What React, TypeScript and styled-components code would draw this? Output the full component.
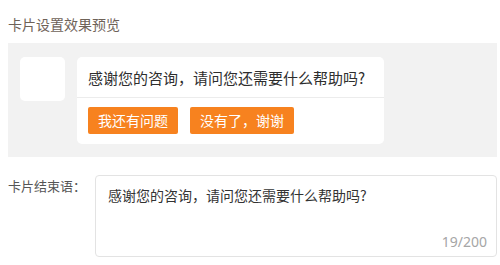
import styled, { createGlobalStyle } from "styled-components";

const GlobalStyle = createGlobalStyle`
    html, body {
        margin: 0;
        padding: 0;
        background: #ffffff;
    }
    body {
        font-family: "Noto Sans CJK SC", "Noto Sans", sans-serif;
        color: #333333;
    }
`;

const message = "感谢您的咨询，请问您还需要什么帮助吗?";
const maxLength = 200;

export default function App() {
    return (
        <Page>
            <GlobalStyle />
            <SectionTitle>卡片设置效果预览</SectionTitle>
            <PreviewPanel>
                <Avatar />
                <Bubble>
                    <BubbleText>{message}</BubbleText>
                    <BubbleActions>
                        <ActionButton>我还有问题</ActionButton>
                        <ActionButton>没有了，谢谢</ActionButton>
                    </BubbleActions>
                </Bubble>
            </PreviewPanel>
            <FormRow>
                <FormLabel>卡片结束语：</FormLabel>
                <TextAreaWrapper>
                    <TextArea readOnly defaultValue={message} />
                    <Counter>
                        {message.length}/{maxLength}
                    </Counter>
                </TextAreaWrapper>
            </FormRow>
        </Page>
    );
}

const Page = styled.div`
    width: 500px;
    height: 265px;
    padding: 0 3px 0 8px;
    box-sizing: border-box;
    overflow: hidden;
`;

const SectionTitle = styled.div`
    height: 43px;
    line-height: 48px;
    font-size: 14px;
    color: #6e6258;
`;

const PreviewPanel = styled.div`
    display: flex;
    align-items: flex-start;
    gap: 12px;
    background: #f2f2f2;
    padding: 14px 12px 13px;
`;

const Avatar = styled.div`
    width: 45px;
    height: 44px;
    border-radius: 5px;
    background: #ffffff;
`;

const Bubble = styled.div`
    width: 307px;
    background: #ffffff;
    border-radius: 5px;
`;

const BubbleText = styled.div`
    height: 40px;
    line-height: 42px;
    padding: 0 11px;
    font-size: 15px;
    color: #2e2e2e;
    border-bottom: 1px solid #ececec;
    white-space: nowrap;
`;

const BubbleActions = styled.div`
    display: flex;
    gap: 12px;
    padding: 9px 11px 10px;
`;

const ActionButton = styled.div`
    height: 27px;
    line-height: 27px;
    padding: 0 10px;
    font-size: 14px;
    color: #ffffff;
    background: #f7821f;
    border-radius: 2px;
`;

const FormRow = styled.div`
    display: flex;
    align-items: flex-start;
    margin-top: 18px;
`;

const FormLabel = styled.div`
    width: 87px;
    flex-shrink: 0;
    padding-top: 2px;
    line-height: 18px;
    font-size: 13px;
    color: #555555;
`;

const TextAreaWrapper = styled.div`
    position: relative;
    flex: 1;
`;

const TextArea = styled.textarea`
    display: block;
    width: 100%;
    height: 82px;
    box-sizing: border-box;
    padding: 9px 12px;
    border: 1px solid #e3e3e3;
    border-radius: 4px;
    resize: none;
    outline: none;
    font-family: "Noto Sans CJK SC", "Noto Sans", sans-serif;
    font-size: 14px;
    line-height: 20px;
    color: #333333;
`;

const Counter = styled.span`
    position: absolute;
    right: 10px;
    bottom: 6px;
    font-family: "Noto Sans", "Noto Sans CJK SC", sans-serif;
    font-size: 14px;
    color: #a6a6a6;
`;
